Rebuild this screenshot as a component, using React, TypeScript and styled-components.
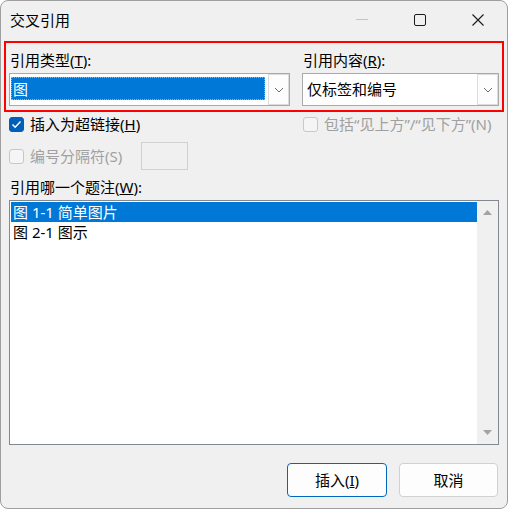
import React from "react";
import styled, { createGlobalStyle } from "styled-components";

const Global = createGlobalStyle`
  html, body { margin: 0; padding: 0; background: #ffffff; }
  * { box-sizing: border-box; }
  body { font-family: "Noto Sans", "Noto Sans CJK SC", sans-serif; font-size: 15px; color: #000; }
`;

const Window = styled.div`
  width: 508px;
  height: 509px;
  border: 1px solid #9e9e9e;
  border-radius: 8px;
  background: #f0f0f0;
  display: flex;
  flex-direction: column;
  overflow: hidden;
`;

const TitleBar = styled.div`
  height: 37px;
  display: flex;
  align-items: center;
  padding-left: 9px;
  flex-shrink: 0;
`;

const Title = styled.div`
  flex: 1;
  font-size: 15px;
  line-height: 20px;
  color: #000;
`;

const CtrlButton = styled.div`
  width: 58px;
  height: 37px;
  display: flex;
  align-items: center;
  justify-content: center;
`;

const Content = styled.div`
  flex: 1;
  display: flex;
  flex-direction: column;
  padding: 3px 3px 0 3px;
`;

const RedBox = styled.div`
  border: 2px solid #ff0000;
  display: flex;
  gap: 12px;
  padding: 0 3px 4px 3px;
`;

const Field = styled.div<{ $w: number }>`
  width: ${(p) => p.$w}px;
  display: flex;
  flex-direction: column;
`;

const Label = styled.div<{ $mt?: number; $indent?: number }>`
  line-height: 20px;
  height: 20px;
  margin-top: ${(p) => p.$mt ?? 0}px;
  margin-left: ${(p) => p.$indent ?? 1}px;
  white-space: nowrap;
`;

const Combo = styled.div`
  margin-top: 3px;
  height: 33px;
  border: 1px solid #a9a9a9;
  background: #fff;
  display: flex;
  align-items: stretch;
`;

const ComboValue = styled.div<{ $selected?: boolean }>`
  flex: 1;
  margin: 3px 3px 5px 1px;
  display: flex;
  align-items: center;
  padding-left: ${(p) => (p.$selected ? 1 : 2)}px;
  line-height: 20px;
  white-space: nowrap;
  background: ${(p) => (p.$selected ? "#0078d7" : "transparent")};
  color: ${(p) => (p.$selected ? "#fff" : "#000")};
  border: 1px ${(p) => (p.$selected ? "dotted #f3a23c" : "solid transparent")};
`;

const ComboButton = styled.div`
  width: 21px;
  border: 1px solid #dcdcdc;
  background: #fdfdfd;
  display: flex;
  align-items: center;
  justify-content: center;
`;

const OptRow = styled.div<{ $mt: number; $h: number }>`
  display: flex;
  align-items: center;
  height: ${(p) => p.$h}px;
  margin-top: ${(p) => p.$mt}px;
  padding-left: 5px;
`;

const Option = styled.div<{ $w?: number; $disabled?: boolean }>`
  display: flex;
  align-items: center;
  gap: 6px;
  width: ${(p) => (p.$w ? `${p.$w}px` : "auto")};
  color: ${(p) => (p.$disabled ? "#a0a0a0" : "#000")};
  line-height: 20px;
  white-space: nowrap;
`;

const Box = styled.div<{ $checked?: boolean }>`
  width: 15px;
  height: 15px;
  border-radius: 3px;
  flex-shrink: 0;
  display: flex;
  align-items: center;
  justify-content: center;
  background: ${(p) => (p.$checked ? "#005fb8" : "#f5f5f5")};
  border: 1px solid ${(p) => (p.$checked ? "#005fb8" : "#c8c8c8")};
`;

const SmallInput = styled.div`
  width: 47px;
  height: 28px;
  margin-left: 18px;
  border: 1px solid #d0d0d0;
  background: #f0f0f0;
`;

const ListBox = styled.div`
  margin-top: 3px;
  margin-left: 5px;
  width: 490px;
  height: 245px;
  border: 1px solid #838790;
  background: #fff;
  display: flex;
`;

const Rows = styled.div`
  flex: 1;
  padding: 1px 0 0 1px;
  display: flex;
  flex-direction: column;
`;

const Row = styled.div<{ $selected?: boolean }>`
  height: 20px;
  line-height: 20px;
  padding-left: 2px;
  white-space: nowrap;
  background: ${(p) => (p.$selected ? "#0078d7" : "transparent")};
  color: ${(p) => (p.$selected ? "#fff" : "#000")};
`;

const ScrollBar = styled.div`
  width: 21px;
  background: #f0f0f0;
  display: flex;
  flex-direction: column;
  justify-content: space-between;
  align-items: center;
  padding: 9px 0 9px 0;
`;

const Footer = styled.div`
  display: flex;
  justify-content: flex-end;
  gap: 12px;
  margin-top: 18px;
  padding-right: 6px;
`;

const Button = styled.div<{ $primary?: boolean; $w: number }>`
  width: ${(p) => p.$w}px;
  height: 34px;
  border-radius: 4px;
  background: #fdfdfd;
  border: 1px solid ${(p) => (p.$primary ? "#0067c0" : "#d1d1d1")};
  display: flex;
  align-items: center;
  justify-content: center;
  line-height: 20px;
`;

const Chevron = () => (
  <svg width="10" height="6" viewBox="0 0 10 6">
    <path d="M1 1 L5 5 L9 1" fill="none" stroke="#6e6e6e" strokeWidth="1" />
  </svg>
);

const Check = () => (
  <svg width="11" height="9" viewBox="0 0 11 9">
    <path d="M1.5 4.5 L4.2 7.2 L9.5 1.5" fill="none" stroke="#fff" strokeWidth="1.5" />
  </svg>
);

const Tri = ({ up }: { up?: boolean }) => (
  <svg width="9" height="5" viewBox="0 0 9 5">
    <path d={up ? "M0 5 L4.5 0 L9 5 Z" : "M0 0 L4.5 5 L9 0 Z"} fill="#a3a3a3" />
  </svg>
);

export default function App() {
  return (
    <>
      <Global />
      <Window>
        <TitleBar>
          <Title>交叉引用</Title>
          <CtrlButton>
            <svg width="12" height="2" viewBox="0 0 12 2">
              <line x1="0" y1="0.5" x2="12" y2="0.5" stroke="#c4c4c4" strokeWidth="1" />
            </svg>
          </CtrlButton>
          <CtrlButton>
            <svg width="12" height="12" viewBox="0 0 12 12">
              <rect x="0.5" y="0.5" width="11" height="11" rx="1.5" fill="none" stroke="#1a1a1a" strokeWidth="1" />
            </svg>
          </CtrlButton>
          <CtrlButton>
            <svg width="12" height="12" viewBox="0 0 12 12">
              <path d="M0.5 0.5 L11.5 11.5 M11.5 0.5 L0.5 11.5" stroke="#1a1a1a" strokeWidth="1.1" />
            </svg>
          </CtrlButton>
        </TitleBar>
        <Content>
          <RedBox>
            <Field $w={281}>
              <Label $mt={7}>
                引用类型(<u>T</u>):
              </Label>
              <Combo>
                <ComboValue $selected>图</ComboValue>
                <ComboButton>
                  <Chevron />
                </ComboButton>
              </Combo>
            </Field>
            <Field $w={197}>
              <Label $mt={7}>
                引用内容(<u>R</u>):
              </Label>
              <Combo>
                <ComboValue>仅标签和编号</ComboValue>
                <ComboButton>
                  <Chevron />
                </ComboButton>
              </Combo>
            </Field>
          </RedBox>
          <OptRow $mt={1} $h={22}>
            <Option $w={294}>
              <Box $checked>
                <Check />
              </Box>
              <span>
                插入为超链接(<u>H</u>)
              </span>
            </Option>
            <Option $disabled>
              <Box />
              <span>包括“见上方”/“见下方”(N)</span>
            </Option>
          </OptRow>
          <OptRow $mt={7} $h={28}>
            <Option $w={114} $disabled>
              <Box />
              <span>编号分隔符(S)</span>
            </Option>
            <SmallInput />
          </OptRow>
          <Label $mt={7} $indent={6}>
            引用哪一个题注(<u>W</u>):
          </Label>
          <ListBox>
            <Rows>
              <Row $selected>图 1-1 简单图片</Row>
              <Row>图 2-1 图示</Row>
            </Rows>
            <ScrollBar>
              <Tri up />
              <Tri />
            </ScrollBar>
          </ListBox>
          <Footer>
            <Button $primary $w={100}>
              插入(<u>I</u>)
            </Button>
            <Button $w={99}>取消</Button>
          </Footer>
        </Content>
      </Window>
    </>
  );
}
